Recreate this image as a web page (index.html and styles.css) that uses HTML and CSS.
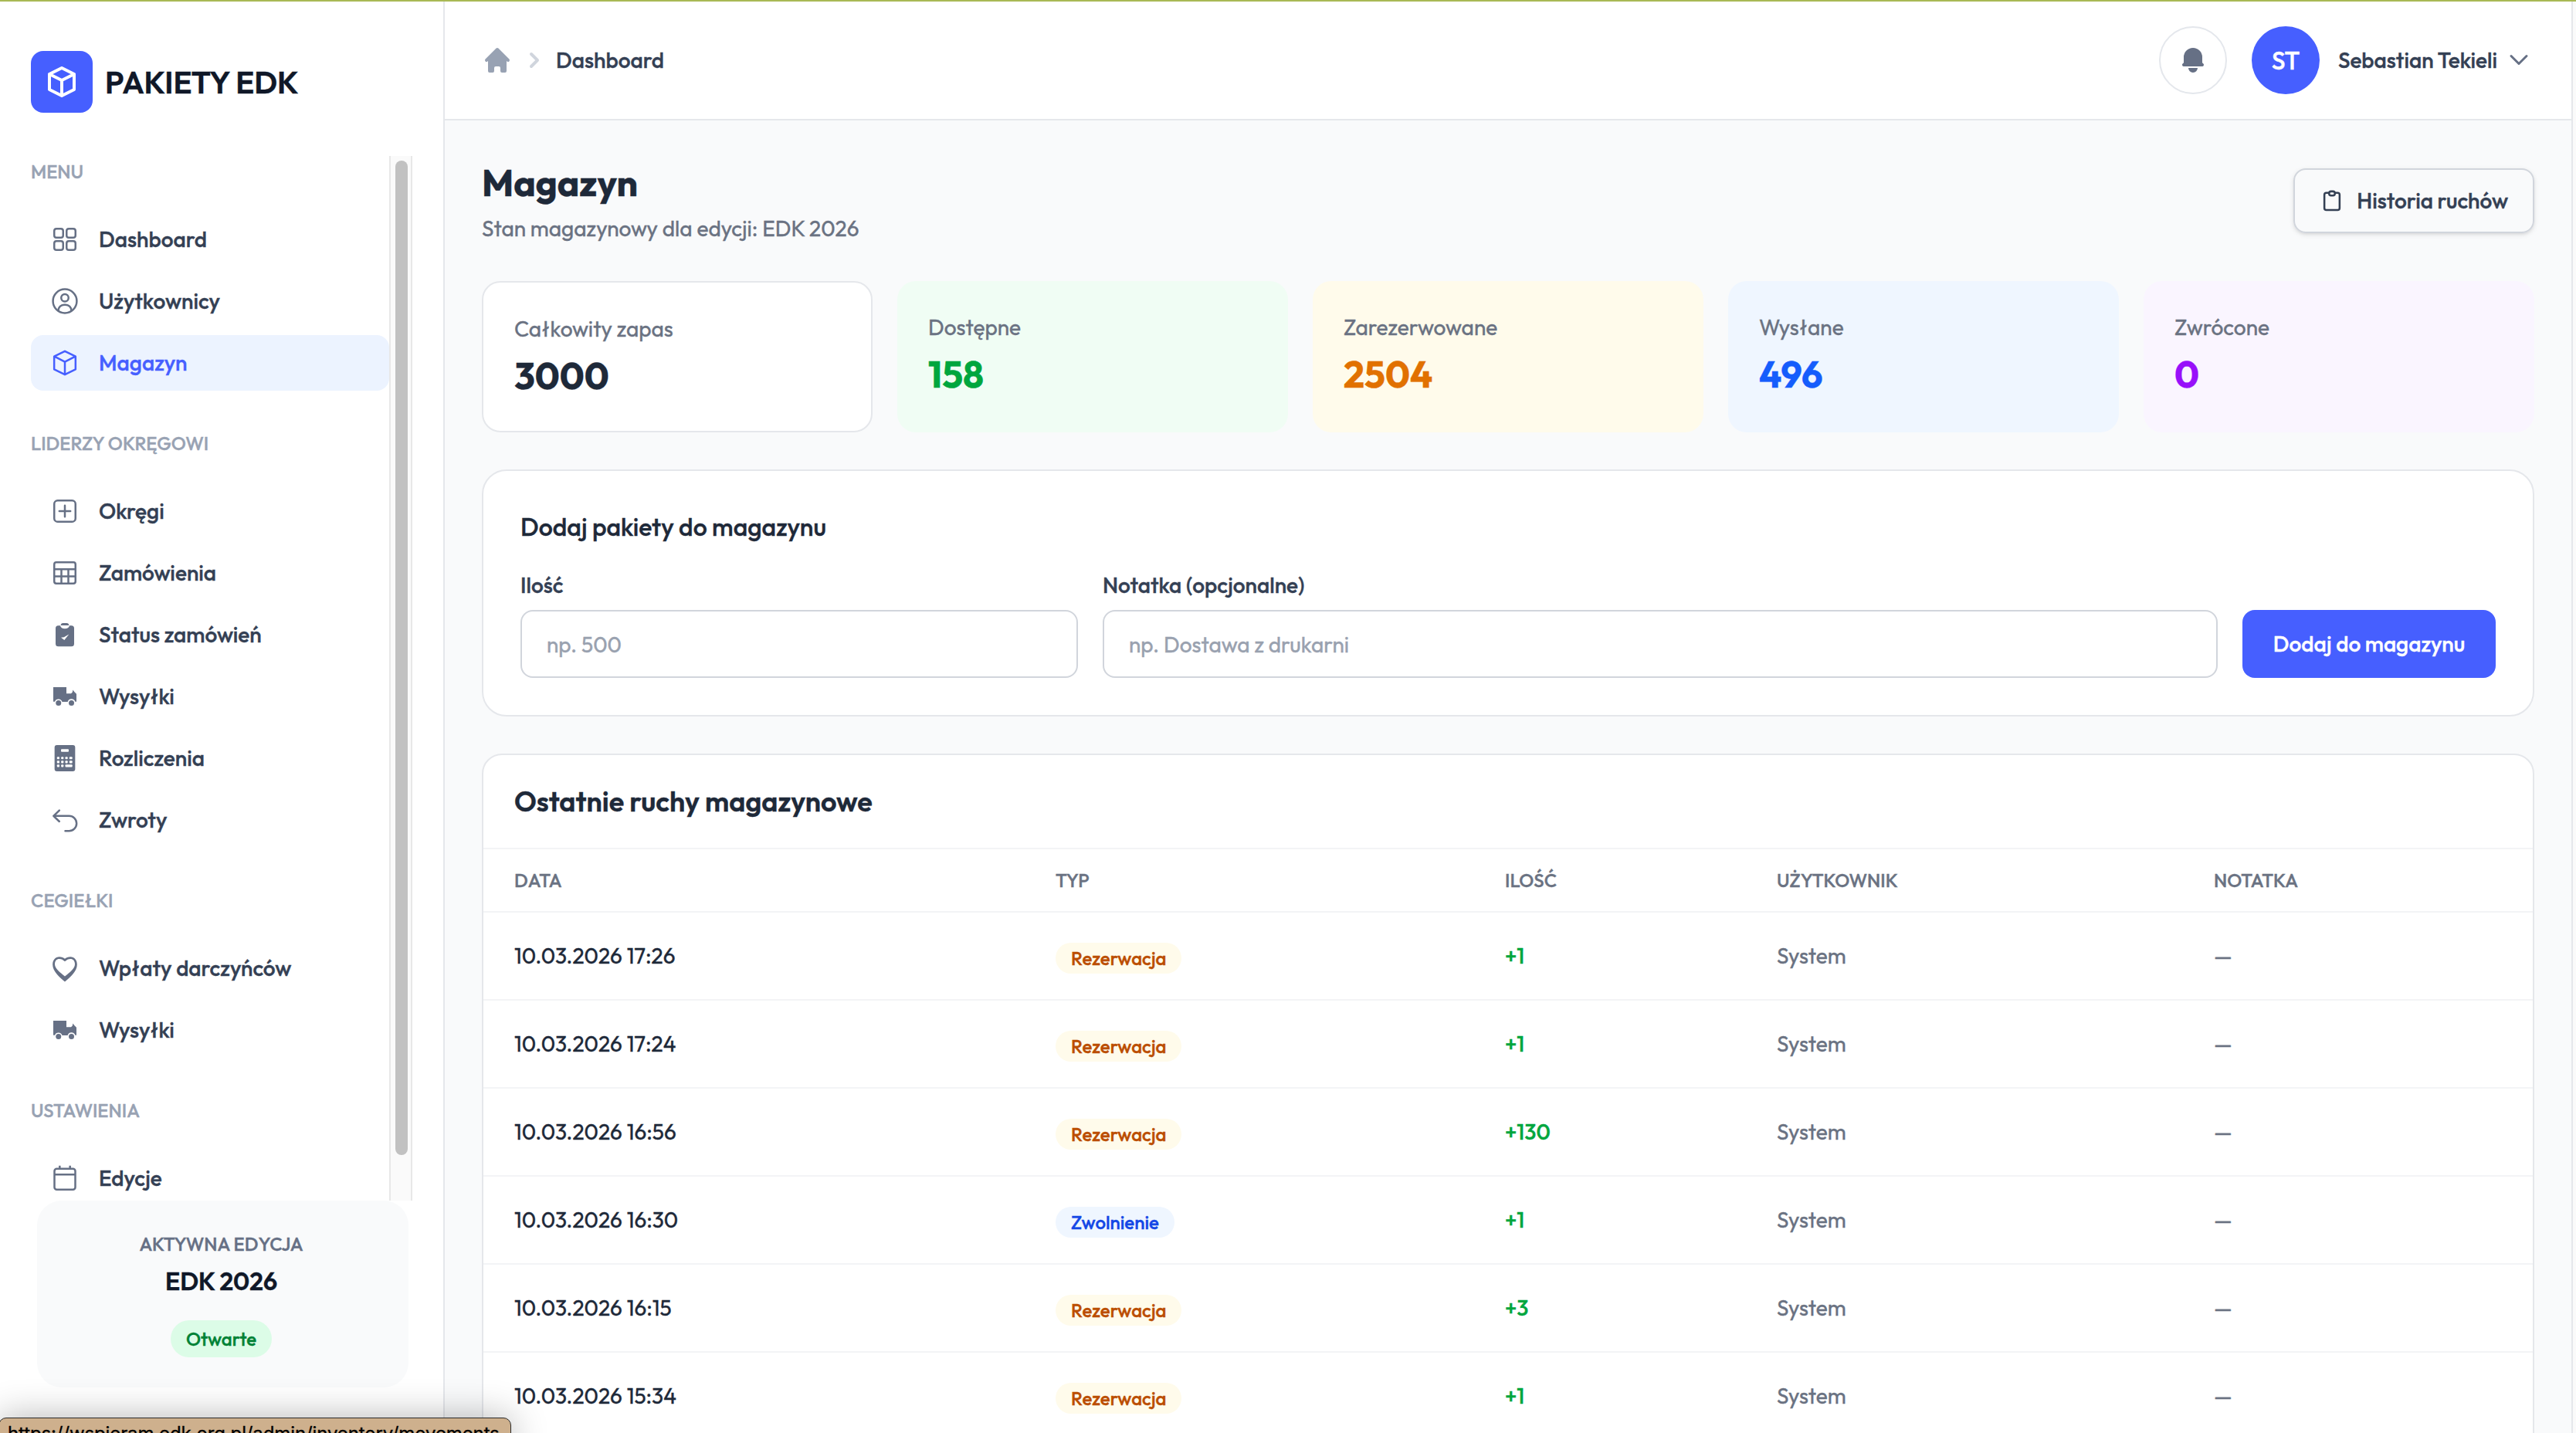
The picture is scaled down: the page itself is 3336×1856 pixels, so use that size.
FILE: index.html
```html
<!DOCTYPE html>
<html lang="pl">
<head>
<meta charset="utf-8">
<title>Pakiety EDK – Magazyn</title>
<link rel="stylesheet" href="styles.css">
</head>
<body>
<svg class="sprite" aria-hidden="true">
  <symbol id="i-grid" viewBox="0 0 24 24"><g class="line"><rect x="3.75" y="3.75" width="6.9" height="6.9" rx="1.7"/><rect x="13.35" y="3.75" width="6.9" height="6.9" rx="1.7"/><rect x="3.75" y="13.35" width="6.9" height="6.9" rx="1.7"/><rect x="13.35" y="13.35" width="6.9" height="6.9" rx="1.7"/></g></symbol>
  <symbol id="i-user" viewBox="0 0 24 24"><g class="line"><circle cx="12" cy="12" r="9.25"/><circle cx="12" cy="9.4" r="2.85"/><path d="M6.9 19.6c0-2.8 2-4.75 4.6-4.75h1c2.6 0 4.6 1.95 4.6 4.75"/></g></symbol>
  <symbol id="i-box" viewBox="0 0 24 24"><path class="line" d="M12 2.9 20.3 7v10L12 21.1 3.7 17V7zM3.9 7 12 11.2 20.1 7M12 11.2V21"/></symbol>
  <symbol id="i-plus" viewBox="0 0 24 24"><g class="line"><rect x="3.75" y="3.75" width="16.5" height="16.5" rx="2.6"/><path d="M12 7.7v8.6M7.7 12h8.6" stroke-linecap="round"/></g></symbol>
  <symbol id="i-table" viewBox="0 0 24 24"><g class="line"><rect x="3.75" y="3.75" width="16.5" height="16.5" rx="1.6"/><path d="M3.75 9.2h16.5M3.75 14.7h16.5M9.3 9.2v11M14.7 9.2v11"/></g></symbol>
  <symbol id="i-clip-solid" viewBox="0 0 24 24"><path d="M6.9 5h1.5c.4 1.5 1.6 2.4 3.6 2.4s3.2-.9 3.6-2.4h1.5a2.1 2.1 0 0 1 2.1 2.1v12a2.1 2.1 0 0 1-2.1 2.1H6.9a2.1 2.1 0 0 1-2.1-2.1v-12A2.1 2.1 0 0 1 6.9 5zM9 14.3l2.6 1.9 3.6-4.5-3.9 2.2z" fill-rule="evenodd"/><path d="M10.6 3h2.8c1 0 1.8.8 1.8 1.8H8.8c0-1 .8-1.8 1.8-1.8z"/></symbol>
  <symbol id="i-truck" viewBox="0 0 24 24"><path d="M3 4.8h10.2v4.9h3.6l1-.9.5-1.9.9 1.4 1.8 1.8v6h-1a3 3 0 0 0-5.8.1h-4.3A3 3 0 0 0 4.2 16.1H3z"/><circle cx="7.05" cy="17.1" r="2.1"/><circle cx="17.1" cy="17.1" r="2.1"/></symbol>
  <symbol id="i-calc" viewBox="0 0 24 24"><rect x="4" y="1.8" width="16" height="20.4" rx="1.8"/><g class="cut"><rect x="9" y="5" width="6" height="2" rx=".6"/><rect x="5.9" y="10.9" width="1.9" height="1.9" rx=".6"/><rect x="9.1" y="10.9" width="1.9" height="1.9" rx=".6"/><rect x="12.3" y="10.9" width="1.9" height="1.9" rx=".6"/><rect x="15.5" y="10.9" width="2.3" height="1.9" rx=".6"/><rect x="5.9" y="14" width="1.9" height="1.9" rx=".6"/><rect x="9.1" y="14" width="1.9" height="1.9" rx=".6"/><rect x="12.3" y="14" width="1.9" height="1.9" rx=".6"/><rect x="15.5" y="14" width="2.3" height="1.9" rx=".6"/><rect x="5.9" y="17" width="1.9" height="1.9" rx=".6"/><rect x="9.1" y="17" width="1.9" height="1.9" rx=".6"/><rect x="12.3" y="17" width="5.5" height="1.9" rx=".6"/></g></symbol>
  <symbol id="i-return" viewBox="0 0 24 24"><path class="line" stroke-linecap="round" d="M3.2 8.9h12.1a5.8 5.8 0 0 1 0 11.6h-3M7.7 4.6 3.2 8.9l4.5 4.3"/></symbol>
  <symbol id="i-heart" viewBox="0 0 24 24"><path fill-rule="evenodd" d="M12 22.5C8.5 19.5 2.5 14.8 2.5 9.2c0-3.7 2.3-6 5.2-6 1.8 0 3.3.6 4.3 1.5 1-.9 2.5-1.5 4.3-1.5 2.9 0 5.2 2.300 5.2 6 0 5.600-6 10.300-9.500 13.300zM12 18.300c3.600-3 7.800-5.900 7.800-9.500 0-2.400-1.400-4-3.500-4-1.600 0-2.900.7-4.300 2-1.400-1.300-2.700-2-4.300-2-2.100 0-3.500 1.600-3.500 4 0 3.600 4.200 6.500 7.800 9.500z"/></symbol>
  <symbol id="i-calendar" viewBox="0 0 24 24"><g class="line"><rect x="3.9" y="4.6" width="16.2" height="16.2" rx="1.8"/><path d="M3.9 9.1h16.2M8 2.3v2.3M16 2.3v2.3"/></g></symbol>
  <symbol id="i-home" viewBox="0 0 20 20"><path d="M10.707 2.293a1 1 0 0 0-1.414 0l-7 7a1 1 0 0 0 1.414 1.414L4 10.414V17a1 1 0 0 0 1 1h2a1 1 0 0 0 1-1v-2a1 1 0 0 1 1-1h2a1 1 0 0 1 1 1v2a1 1 0 0 0 1 1h2a1 1 0 0 0 1-1v-6.586l.293.293a1 1 0 0 0 1.414-1.414l-7-7z"/></symbol>
  <symbol id="i-next" viewBox="0 0 20 20"><path fill-rule="evenodd" d="M7.293 14.707a1 1 0 0 1 0-1.414L10.586 10 7.293 6.707a1 1 0 0 1 1.414-1.414l4 4a1 1 0 0 1 0 1.414l-4 4a1 1 0 0 1-1.414 0z"/></symbol>
  <symbol id="i-bell" viewBox="0 0 20 20"><path d="M10 2a6 6 0 0 0-6 6v3.586l-.707.707A1 1 0 0 0 4 14h12a1 1 0 0 0 .707-1.707L16 11.586V8a6 6 0 0 0-6-6zM10 18a3 3 0 0 1-3-3h6a3 3 0 0 1-3 3z"/></symbol>
  <symbol id="i-clip" viewBox="0 0 24 24"><g class="line bold"><path d="M9.3 4.3H6.5A1.900 1.900 0 0 0 4.600 6.200v12.900A1.900 1.900 0 0 0 6.500 21h11a1.900 1.900 0 0 0 1.900-1.900V6.200a1.900 1.900 0 0 0-1.900-1.900h-2.800"/><rect x="9.2" y="2.9" width="5.6" height="4" rx="1.9"/></g></symbol>
</svg>

<div class="app">
  <aside class="sidebar">
    <div class="brand">
      <span class="brand-mark"><svg class="brand-icon" viewBox="0 0 24 24"><path d="M20 7l-8-4-8 4m16 0l-8 4m8-4v10l-8 4m0-10L4 7m8 4v10M4 7v10l8 4"/></svg></span>
      <span class="brand-name">PAKIETY EDK</span>
    </div>
    <div class="scroller">
      <nav class="nav">
        <section class="group">
          <h3 class="group-title">MENU</h3>
          <a class="item"><svg class="icon"><use href="#i-grid"/></svg>Dashboard</a>
          <a class="item"><svg class="icon"><use href="#i-user"/></svg>Użytkownicy</a>
          <a class="item active"><svg class="icon"><use href="#i-box"/></svg>Magazyn</a>
        </section>
        <section class="group">
          <h3 class="group-title">LIDERZY OKRĘGOWI</h3>
          <a class="item"><svg class="icon"><use href="#i-plus"/></svg>Okręgi</a>
          <a class="item"><svg class="icon"><use href="#i-table"/></svg>Zamówienia</a>
          <a class="item"><svg class="icon"><use href="#i-clip-solid"/></svg>Status zamówień</a>
          <a class="item"><svg class="icon"><use href="#i-truck"/></svg>Wysyłki</a>
          <a class="item"><svg class="icon"><use href="#i-calc"/></svg>Rozliczenia</a>
          <a class="item"><svg class="icon"><use href="#i-return"/></svg>Zwroty</a>
        </section>
        <section class="group">
          <h3 class="group-title">CEGIEŁKI</h3>
          <a class="item"><svg class="icon"><use href="#i-heart"/></svg>Wpłaty darczyńców</a>
          <a class="item"><svg class="icon"><use href="#i-truck"/></svg>Wysyłki</a>
        </section>
        <section class="group">
          <h3 class="group-title">USTAWIENIA</h3>
          <a class="item"><svg class="icon"><use href="#i-calendar"/></svg>Edycje</a>
        </section>
      </nav>
      <div class="track"><div class="thumb"></div></div>
    </div>
    <div class="edition">
      <p class="edition-label">AKTYWNA EDYCJA</p>
      <p class="edition-name">EDK 2026</p>
      <span class="edition-state">Otwarte</span>
    </div>
  </aside>

  <div class="main">
    <header class="topbar">
      <div class="crumbs">
        <svg class="icon home"><use href="#i-home"/></svg>
        <svg class="icon next"><use href="#i-next"/></svg>
        <span>Dashboard</span>
      </div>
      <div class="account">
        <span class="bell"><svg class="icon"><use href="#i-bell"/></svg></span>
        <span class="avatar">ST</span>
        <span class="user">Sebastian Tekieli</span>
        <svg class="caret" viewBox="0 0 28 20"><path d="M4 4.500 14 14.500 24 4.500"/></svg>
      </div>
    </header>

    <main class="page">
      <div class="page-head">
        <div>
          <h1 class="title">Magazyn</h1>
          <p class="subtitle">Stan magazynowy dla edycji: EDK 2026</p>
        </div>
        <a class="history"><svg class="history-icon"><use href="#i-clip"/></svg>Historia ruchów</a>
      </div>

      <div class="stats">
        <div class="stat total"><p class="stat-label">Całkowity zapas</p><p class="stat-value">3000</p></div>
        <div class="stat green"><p class="stat-label">Dostępne</p><p class="stat-value">158</p></div>
        <div class="stat amber"><p class="stat-label">Zarezerwowane</p><p class="stat-value">2504</p></div>
        <div class="stat blue"><p class="stat-label">Wysłane</p><p class="stat-value">496</p></div>
        <div class="stat purple"><p class="stat-label">Zwrócone</p><p class="stat-value">0</p></div>
      </div>

      <form class="card add">
        <h2 class="add-title">Dodaj pakiety do magazynu</h2>
        <div class="fields">
          <label class="field">Ilość<input class="input" type="text" placeholder="np. 500"></label>
          <label class="field">Notatka (opcjonalne)<input class="input" type="text" placeholder="np. Dostawa z drukarni"></label>
          <button class="submit" type="button">Dodaj do magazynu</button>
        </div>
      </form>

      <section class="card moves">
        <h2 class="moves-title">Ostatnie ruchy magazynowe</h2>
        <table class="table">
          <colgroup><col class="c-date"><col class="c-type"><col class="c-qty"><col class="c-user"><col></colgroup>
          <thead><tr><th>DATA</th><th>TYP</th><th>ILOŚĆ</th><th>UŻYTKOWNIK</th><th>NOTATKA</th></tr></thead>
          <tbody>
            <tr><td class="date">10.03.2026 17:26</td><td><span class="badge reserve">Rezerwacja</span></td><td class="qty">+1</td><td>System</td><td>—</td></tr>
            <tr><td class="date">10.03.2026 17:24</td><td><span class="badge reserve">Rezerwacja</span></td><td class="qty">+1</td><td>System</td><td>—</td></tr>
            <tr><td class="date">10.03.2026 16:56</td><td><span class="badge reserve">Rezerwacja</span></td><td class="qty">+130</td><td>System</td><td>—</td></tr>
            <tr><td class="date">10.03.2026 16:30</td><td><span class="badge release">Zwolnienie</span></td><td class="qty">+1</td><td>System</td><td>—</td></tr>
            <tr><td class="date">10.03.2026 16:15</td><td><span class="badge reserve">Rezerwacja</span></td><td class="qty">+3</td><td>System</td><td>—</td></tr>
            <tr><td class="date">10.03.2026 15:34</td><td><span class="badge reserve">Rezerwacja</span></td><td class="qty">+1</td><td>System</td><td>—</td></tr>
            <tr><td></td><td></td><td></td><td></td><td></td></tr>
          </tbody>
        </table>
      </section>
    </main>
  </div>
</div>
<div class="status-url">https://wspieram.edk.org.pl/admin/inventory/movements</div>
</body>
</html>
```
FILE: styles.css
```css
* { box-sizing: border-box; }
html, body { height: 100%; overflow: hidden; }
body {
  margin: 0;
  position: relative;
  font-family: Outfit, Lato, sans-serif;
  font-size: 28px;
  line-height: 40px;
  color: #344054;
  background: #fafafa;
  -webkit-text-stroke-width: .35px;
}
h1, h2, h3, p { margin: 0; }
.sprite { position: absolute; width: 0; height: 0; }
.line { fill: none; stroke: currentColor; stroke-width: 1.5; stroke-linejoin: round; }
.bold { stroke-width: 1.9; }
.cut { fill: #fff; }
.icon { width: 40px; height: 40px; flex: none; fill: currentColor; }

.app { display: flex; height: 1856px; border-top: 2px solid #a9b955; overflow: hidden; padding-right: 4px; }

/* Sidebar */
.sidebar {
  width: 576px;
  flex: none;
  padding: 64px 40px 0;
  background: #fff;
  border-right: 2px solid #e5e7eb;
}
.brand { display: flex; align-items: center; gap: 16px; height: 80px; }
.brand-mark {
  display: flex; align-items: center; justify-content: center;
  width: 80px; height: 80px; border-radius: 16px; background: #465fff;
}
.brand-icon { width: 48px; height: 48px; fill: none; stroke: #fff; stroke-width: 2; stroke-linecap: round; stroke-linejoin: round; }
.brand-name { font-size: 40px; font-weight: 600; color: #101828; }

.scroller { display: flex; height: 1353px; margin-top: 56px; overflow: hidden; }
.nav { width: 464px; display: flex; flex-direction: column; gap: 48px; }
.group { display: flex; flex-direction: column; gap: 8px; }
.group-title { margin-bottom: 24px; font-size: 24px; font-weight: 500; line-height: 40px; color: #98a2b3; }
.item {
  display: flex; align-items: center; gap: 24px;
  height: 72px; padding: 0 24px; border-radius: 16px;
  font-weight: 500; color: #344054; flex: none;
}
.item .icon { color: #667085; }
.active { background: #ecf3ff; color: #465fff; }
.active .icon { color: #465fff; }
.track { width: 30px; padding: 6px; background: #fafafa; border: solid #e8e8e8; border-width: 0 2px; }
.thumb { width: 16px; height: 1288px; border-radius: 8px; background: #c1c1c1; }

.edition {
  display: flex; flex-direction: column; align-items: center;
  width: 481px; height: 242px; margin-left: 8px; padding: 36px 4px 0 0;
  border-radius: 32px; background: #f9fafb;
}
.edition-label { font-size: 24px; font-weight: 500; color: #667085; }
.edition-name { margin-top: 4px; font-size: 32px; font-weight: 600; line-height: 48px; color: #101828; }
.edition-state {
  margin-top: 27px; padding: 4px 20px; border-radius: 24px;
  background: #dcfce7; color: #008236; font-size: 24px; font-weight: 500;
}

/* Top bar */
.main { flex: 1; min-width: 0; background: #f9fafb; border-right: 2px solid #e5e7eb; }
.topbar {
  display: flex; align-items: center; justify-content: space-between;
  height: 154px; padding: 0 54px 0 48px;
  background: #fff; border-bottom: 2px solid #e5e7eb;
}
.crumbs { display: flex; align-items: center; gap: 8px; font-weight: 500; }
.home { color: #98a2b3; }
.next { color: #d0d5dd; }
.account { display: flex; align-items: center; font-weight: 500; }
.bell, .avatar { display: flex; align-items: center; justify-content: center; width: 88px; height: 88px; border-radius: 50%; }
.bell { border: 2px solid #e4e7ec; color: #667085; }
.avatar { margin: 0 24px 0 32px; background: #465fff; color: #fff; font-size: 32px; }
.caret { width: 28px; height: 20px; margin-left: 14px; fill: none; stroke: #667085; stroke-width: 3; stroke-linecap: round; stroke-linejoin: round; }

/* Page */
.page { padding: 48px; display: flex; flex-direction: column; gap: 48px; }
.page-head { display: flex; align-items: center; justify-content: space-between; height: 112px; }
.title { font-size: 48px; font-weight: 700; line-height: 64px; color: #1e2939; }
.subtitle { margin-top: 8px; color: #6a7282; }
.history {
  display: flex; align-items: center; gap: 16px;
  height: 84px; padding: 0 32px;
  border: 2px solid #d1d5dc; border-radius: 16px;
  font-weight: 500; box-shadow: 0 2px 6px rgba(0, 0, 0, .1), 0 2px 4px -2px rgba(0, 0, 0, .1);
}
.history-icon { width: 32px; height: 32px; }

.stats { display: grid; grid-template-columns: repeat(5, 1fr); gap: 32px; }
.stat { padding: 40px; border-radius: 24px; }
.stat-label { color: #6a7282; }
.stat-value { margin-top: 8px; font-size: 48px; font-weight: 700; line-height: 64px; }
.total { background: #fff; border: 2px solid #e5e7eb; }
.total .stat-value { color: #1e2939; }
.green { background: #f0fdf4; }
.green .stat-value { color: #00a63e; }
.amber { background: #fffbeb; }
.amber .stat-value { color: #e17100; }
.blue { background: #eff6ff; }
.blue .stat-value { color: #155dfc; }
.purple { background: #faf5ff; }
.purple .stat-value { color: #9810fa; }

.card { background: #fff; border: 2px solid #e5e7eb; }
.add { padding: 48px; border-radius: 32px; }
.add-title { font-size: 32px; font-weight: 500; line-height: 48px; color: #1e2939; }
.fields { display: grid; grid-template-columns: 722px 1fr 328px; gap: 32px; align-items: end; margin-top: 32px; }
.field { display: flex; flex-direction: column; gap: 12px; font-weight: 500; }
.input {
  height: 88px; padding: 0 32px; border: 2px solid #d1d5dc; border-radius: 16px;
  background: #fff; font: 400 28px/40px Outfit, Lato, sans-serif;
}
.input::placeholder { color: #99a1af; opacity: 1; }
.submit {
  height: 88px; border: 0; border-radius: 16px; background: #465fff;
  color: #fff; font: 500 28px/40px Outfit, Lato, sans-serif;
}

.moves { border-radius: 26px; overflow: hidden; }
.moves-title { padding: 32px 40px; font-size: 36px; font-weight: 600; line-height: 56px; color: #1e2939; }
.table { width: 100%; table-layout: fixed; border-collapse: separate; border-spacing: 0; border-top: 2px solid #f3f4f6; }
.c-date { width: 701px; }
.c-type { width: 582px; }
.c-qty { width: 352px; }
.c-user { width: 566px; }
.table th, .table td { padding: 0 40px; border-bottom: 2px solid #f3f4f6; text-align: left; color: #6a7282; }
.table th { height: 82px; font-size: 24px; font-weight: 500; }
.table td { height: 114px; }
.table .date { color: #1e2939; }
.table .qty { color: #00a63e; font-weight: 500; }
.badge { display: block; width: fit-content; margin-top: 5px; padding: 0 20px; border-radius: 20px; font-size: 24px; font-weight: 500; }
.reserve { background: #fffbeb; color: #bb4d00; }
.release { background: #eff6ff; color: #1447e6; }

/* Link preview bubble along the bottom edge */
.status-url {
  position: absolute; left: -2px; top: 1836px;
  width: 664px; height: 48px; padding: 2px 11px;
  border: 1px solid #2b2b2b; border-radius: 10px;
  background: #ceb08d; color: #000;
  font-family: Inter, sans-serif; font-size: 24px; line-height: 36px; letter-spacing: -.12px; white-space: nowrap;
  box-shadow: 0 0 48px rgba(0, 0, 0, .3);
}
```
